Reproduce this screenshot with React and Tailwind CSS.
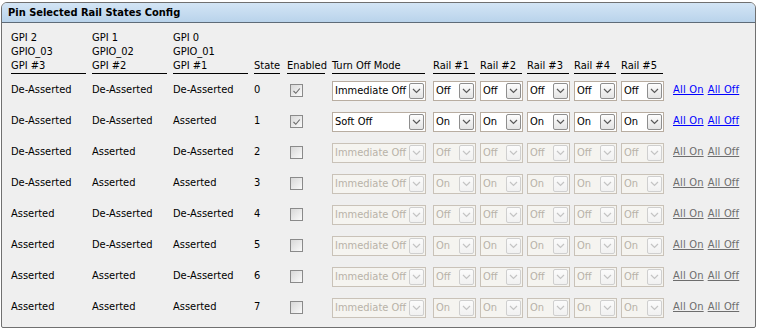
import React from 'react';

const rows = [
    { a: 'De-Asserted', b: 'De-Asserted', c: 'De-Asserted', on: true, mode: 'Immediate Off', rail: 'Off' },
    { a: 'De-Asserted', b: 'De-Asserted', c: 'Asserted', on: true, mode: 'Soft Off', rail: 'On' },
    { a: 'De-Asserted', b: 'Asserted', c: 'De-Asserted', on: false, mode: 'Immediate Off', rail: 'Off' },
    { a: 'De-Asserted', b: 'Asserted', c: 'Asserted', on: false, mode: 'Immediate Off', rail: 'On' },
    { a: 'Asserted', b: 'De-Asserted', c: 'De-Asserted', on: false, mode: 'Immediate Off', rail: 'Off' },
    { a: 'Asserted', b: 'De-Asserted', c: 'Asserted', on: false, mode: 'Immediate Off', rail: 'On' },
    { a: 'Asserted', b: 'Asserted', c: 'De-Asserted', on: false, mode: 'Immediate Off', rail: 'Off' },
    { a: 'Asserted', b: 'Asserted', c: 'Asserted', on: false, mode: 'Immediate Off', rail: 'On' },
];

const cols = 'grid grid-cols-[81px_81px_81px_33px_45px_101px_47px_47px_47px_47px_52px_auto]';

const Chevron = ({ disabled }) => (
    <svg width="9" height="6" viewBox="0 0 9 6" className="block">
        <path d="M1 1 L4.5 4.5 L8 1" fill="none" stroke={disabled ? '#c4c4c4' : '#5a5a5a'} strokeWidth="1.2" />
    </svg>
);

const Combo = ({ value, width, disabled }) => (
    <div
        className={`flex items-center h-[20px] border ${disabled ? 'border-[#c9c2b8] bg-[#f5f4f0] text-[#b8b2a8]' : 'border-[#b8ada1] bg-white text-black'} ${width}`}
    >
        <span className="flex-1 pl-[2px] overflow-hidden whitespace-nowrap leading-[18px]">{value}</span>
        <div
            className={`mr-[1px] w-[15px] h-[16px] rounded-[2px] border flex items-center justify-center bg-gradient-to-b ${disabled ? 'border-[#cfcfcf] from-[#fbfbfb] to-[#f1f1f1]' : 'border-[#8e8e8e] from-[#fdfdfd] to-[#e4e4e4]'}`}
        >
            <Chevron disabled={disabled} />
        </div>
    </div>
);

const Check = ({ checked }) => (
    <div className="ml-[3px] w-[13px] h-[13px] border border-[#8a8a8a] bg-gradient-to-br from-[#d8d8d8] to-[#fafafa] flex items-center justify-center">
        {checked && (
            <svg width="9" height="8" viewBox="0 0 9 8" className="block">
                <path d="M1.5 4 L3.8 6.3 L7.8 1.5" fill="none" stroke="#6a6a6a" strokeWidth="1.1" />
            </svg>
        )}
    </div>
);

const HeadCell = ({ lines, width }) => (
    <div className="flex flex-col justify-end">
        {lines.map((l) => (
            <div key={l} className="leading-[14px] whitespace-nowrap">{l}</div>
        ))}
        <div className={`h-[1px] bg-black ${width}`} />
    </div>
);

export default function App() {
    return (
        <div className="w-[758px] h-[333px] bg-white pt-[2px] pl-[1px] text-[11px] text-black font-['DejaVu_Sans_Condensed','DejaVu_Sans',sans-serif]">
            <div className="w-[755px] h-[326px] border border-[#707070] rounded-t-[6px] rounded-b-[2px] bg-[#efefef] overflow-hidden">
                <div className="h-[20px] bg-gradient-to-b from-[#d3e5f5] to-[#b9d3eb] border-b border-[#5e6b78] pl-[6px] flex items-center font-bold leading-none">
                    Pin Selected Rail States Config
                </div>

                <div className="pl-[9px] pt-[8px]">
                    {/* header */}
                    <div className={`${cols} items-end`}>
                        <HeadCell lines={['GPI 2', 'GPIO_03', 'GPI #3']} width="w-[75px]" />
                        <HeadCell lines={['GPI 1', 'GPIO_02', 'GPI #2']} width="w-[75px]" />
                        <HeadCell lines={['GPI 0', 'GPIO_01', 'GPI #1']} width="w-[75px]" />
                        <HeadCell lines={['State']} width="w-[26px]" />
                        <HeadCell lines={['Enabled']} width="w-[38px]" />
                        <HeadCell lines={['Turn Off Mode']} width="w-[93px]" />
                        <HeadCell lines={['Rail #1']} width="w-[42px]" />
                        <HeadCell lines={['Rail #2']} width="w-[42px]" />
                        <HeadCell lines={['Rail #3']} width="w-[42px]" />
                        <HeadCell lines={['Rail #4']} width="w-[42px]" />
                        <HeadCell lines={['Rail #5']} width="w-[42px]" />
                        <div />
                    </div>

                    {/* rows */}
                    <div className="pt-[1px]">
                        {rows.map((r, i) => (
                            <div key={i} className={`${cols} h-[31px] items-center`}>
                                <div>{r.a}</div>
                                <div>{r.b}</div>
                                <div>{r.c}</div>
                                <div>{i}</div>
                                <div><Check checked={r.on} /></div>
                                <div><Combo value={r.mode} width="w-[94px]" disabled={!r.on} /></div>
                                {[0, 1, 2, 3, 4].map((k) => (
                                    <div key={k}><Combo value={r.rail} width="w-[43px]" disabled={!r.on} /></div>
                                ))}
                                <div className={`flex gap-[4px] underline whitespace-nowrap tracking-[0.2px] ${r.on ? 'text-[#0000ff]' : 'text-[#6d6d6d]'}`}>
                                    <span>All On</span>
                                    <span>All Off</span>
                                </div>
                            </div>
                        ))}
                    </div>
                </div>
            </div>
        </div>
    );
}
